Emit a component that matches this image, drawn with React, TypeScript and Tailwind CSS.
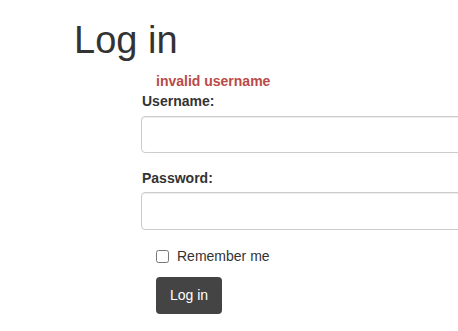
export default function App() {
  return (
    <div className="min-h-screen overflow-hidden bg-white font-['Liberation_Sans',Arial,sans-serif] text-[14px] text-[#333]">
      <h1 className="ml-[74px] mt-[18px] text-[38px] leading-[44px] font-normal">Log in</h1>

      <form className="ml-[141px] mt-[9px] w-[340px]">
        <div className="pl-[15px] font-bold leading-5 text-[#b94a48]">invalid username</div>

        <label className="block font-bold leading-5 pl-px">Username:</label>
        <input
          type="text"
          className="mt-[5px] block h-[37px] w-full rounded-[4px] border border-[#ccc] px-3 shadow-[inset_0_1px_1px_rgba(0,0,0,0.075)] outline-none"
        />

        <label className="mt-[15px] block font-bold leading-5 pl-px">Password:</label>
        <input
          type="password"
          className="mt-[4px] block h-[38px] w-full rounded-[4px] border border-[#ccc] px-3 shadow-[inset_0_1px_1px_rgba(0,0,0,0.075)] outline-none"
        />

        <div className="mt-[16px] flex items-center gap-2 pl-[15px]">
          <input type="checkbox" className="m-0 h-[13px] w-[13px]" />
          <span className="leading-5">Remember me</span>
        </div>

        <button
          type="button"
          className="ml-[15px] mt-[11px] h-[37px] rounded-[4px] bg-[#444] px-[14px] text-[14px] text-white"
        >
          Log in
        </button>
      </form>
    </div>
  );
}
